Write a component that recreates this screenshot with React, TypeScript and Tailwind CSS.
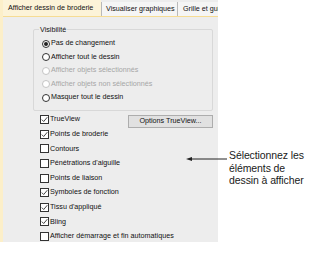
const RADIOS = [
  { label: 'Pas de changement', checked: true, disabled: false },
  { label: 'Afficher tout le dessin', checked: false, disabled: false },
  { label: 'Afficher objets sélectionnés', checked: false, disabled: true },
  { label: 'Afficher objets non sélectionnés', checked: false, disabled: true },
  { label: 'Masquer tout le dessin', checked: false, disabled: false },
];

const CHECKS = [
  { label: 'TrueView', checked: true },
  { label: 'Points de broderie', checked: true },
  { label: 'Contours', checked: false },
  { label: "Pénétrations d'aiguille", checked: false },
  { label: 'Points de liaison', checked: false },
  { label: 'Symboles de fonction', checked: true },
  { label: "Tissu d'appliqué", checked: true },
  { label: 'Bling', checked: true },
  { label: 'Afficher démarrage et fin automatiques', checked: false },
];

function Radio({ checked, disabled }: { checked: boolean; disabled: boolean }) {
  return (
    <span
      className={`w-[8px] h-[8px] rounded-full border flex items-center justify-center shrink-0 bg-white ${
        disabled ? 'border-[#c4c4c4]' : 'border-[#333333]'
      }`}
    >
      {checked && <span className="w-[4px] h-[4px] rounded-full bg-[#222222]" />}
    </span>
  );
}

function Check({ checked }: { checked: boolean }) {
  return (
    <span className="w-[9px] h-[9px] border border-[#333333] bg-white shrink-0 flex items-center justify-center">
      {checked && (
        <svg width="7" height="7" viewBox="0 0 7 7">
          <path d="M0.8 3.6 L2.7 5.5 L6.3 1.2" fill="none" stroke="#333" strokeWidth="0.9" />
        </svg>
      )}
    </span>
  );
}

export default function App() {
  return (
    <div
      className="relative w-[321px] h-[268px] bg-white overflow-hidden text-[7.2px] text-[#111111]"
      style={{ fontFamily: '"Liberation Sans", Arial, sans-serif' }}
    >
      {/* Dialog panel */}
      <div className="w-[218px] h-[242px] bg-[#ededed] border-l-[3px] border-[#fcefc9] flex flex-col">
        {/* Tabs */}
        <div className="h-[18px] flex items-end bg-[#ededed] border-b border-[#f6dc93]">
          <div className="h-[16px] w-[98px] bg-[#fcf3d8] flex items-center pl-[5px] whitespace-nowrap">
            Afficher dessin de broderie
          </div>
          <div className="h-[14px] w-[77px] border-l border-r border-[#b9b9b9] bg-[#f5f5f5] flex items-center pl-[4px] whitespace-nowrap">
            Visualiser graphiques
          </div>
          <div className="h-[14px] flex-1 bg-[#f5f5f5] flex items-center pl-[5px] whitespace-nowrap overflow-hidden">
            Grille et gui
          </div>
        </div>

        {/* Visibilité group */}
        <div className="ml-[30px] mr-[5px] mt-[12px] relative border border-[#d8d8d8] rounded-[2px] pt-[7px] pb-[5px]">
          <span className="absolute left-[5px] top-[-5px] bg-[#ededed] px-[1px] leading-[9px]">Visibilité</span>
          {RADIOS.map((r) => (
            <div
              key={r.label}
              className={`h-[13.5px] flex items-center gap-[1px] pl-[8px] whitespace-nowrap ${
                r.disabled ? 'text-[#a6a6a6]' : ''
              }`}
            >
              <Radio checked={r.checked} disabled={r.disabled} />
              <span>{r.label}</span>
            </div>
          ))}
        </div>

        {/* Checkboxes + button */}
        <div className="flex mt-[2px] ml-[37px] mr-[5px]">
          <div className="flex flex-col flex-1">
            {CHECKS.map((c) => (
              <div key={c.label} className="h-[14.6px] flex items-center gap-[1px] whitespace-nowrap">
                <Check checked={c.checked} />
                <span>{c.label}</span>
              </div>
            ))}
          </div>
          <div className="absolute left-[128px] top-[115px] w-[85px] h-[13px] bg-[#e1e1e1] border border-[#adadad] flex items-center justify-center whitespace-nowrap">
            Options TrueView...
          </div>
        </div>
      </div>

      {/* Callout */}
      <div className="absolute left-[186px] top-[156px] flex items-center">
        <svg width="42" height="6" viewBox="0 0 42 6">
          <path d="M0 3 L6 1 L6 5 Z" fill="#222" />
          <path d="M5 3 H41" stroke="#222" strokeWidth="1" />
        </svg>
      </div>
      <div className="absolute left-[229px] top-[149px] text-[10.5px] leading-[12.5px] text-[#1a1a1a] tracking-[-0.1px]">
        Sélectionnez les
        <br />
        éléments de
        <br />
        dessin à afficher
      </div>
    </div>
  );
}
